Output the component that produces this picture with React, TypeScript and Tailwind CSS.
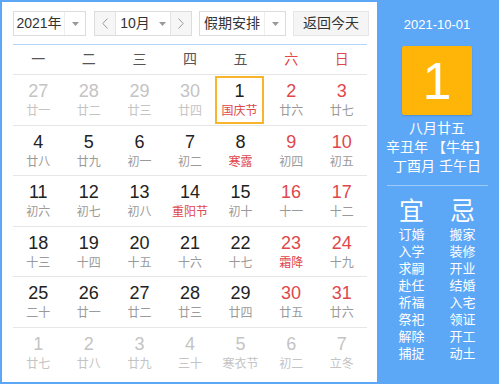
import React from 'react'

type Day = { n: number; sub: string; muted?: boolean; red?: boolean; subRed?: boolean; today?: boolean }

const rows: Day[][] = [
  [
    { n: 27, sub: '廿一', muted: true },
    { n: 28, sub: '廿二', muted: true },
    { n: 29, sub: '廿三', muted: true },
    { n: 30, sub: '廿四', muted: true },
    { n: 1, sub: '国庆节', subRed: true, today: true },
    { n: 2, sub: '廿六', red: true },
    { n: 3, sub: '廿七', red: true },
  ],
  [
    { n: 4, sub: '廿八' },
    { n: 5, sub: '廿九' },
    { n: 6, sub: '初一' },
    { n: 7, sub: '初二' },
    { n: 8, sub: '寒露', subRed: true },
    { n: 9, sub: '初四', red: true },
    { n: 10, sub: '初五', red: true },
  ],
  [
    { n: 11, sub: '初六' },
    { n: 12, sub: '初七' },
    { n: 13, sub: '初八' },
    { n: 14, sub: '重阳节', subRed: true },
    { n: 15, sub: '初十' },
    { n: 16, sub: '十一', red: true },
    { n: 17, sub: '十二', red: true },
  ],
  [
    { n: 18, sub: '十三' },
    { n: 19, sub: '十四' },
    { n: 20, sub: '十五' },
    { n: 21, sub: '十六' },
    { n: 22, sub: '十七' },
    { n: 23, sub: '霜降', red: true, subRed: true },
    { n: 24, sub: '十九', red: true },
  ],
  [
    { n: 25, sub: '二十' },
    { n: 26, sub: '廿一' },
    { n: 27, sub: '廿二' },
    { n: 28, sub: '廿三' },
    { n: 29, sub: '廿四' },
    { n: 30, sub: '廿五', red: true },
    { n: 31, sub: '廿六', red: true },
  ],
  [
    { n: 1, sub: '廿七', muted: true },
    { n: 2, sub: '廿八', muted: true },
    { n: 3, sub: '廿九', muted: true },
    { n: 4, sub: '三十', muted: true },
    { n: 5, sub: '寒衣节', muted: true },
    { n: 6, sub: '初二', muted: true },
    { n: 7, sub: '立冬', muted: true },
  ],
]

const weekdays = ['一', '二', '三', '四', '五', '六', '日']
const yi = ['订婚', '入学', '求嗣', '赴任', '祈福', '祭祀', '解除', '捕捉']
const ji = ['搬家', '装修', '开业', '结婚', '入宅', '领证', '开工', '动土']

function Caret() {
  return (
    <svg width="7" height="4" viewBox="0 0 7 4">
      <polygon points="0,0 7,0 3.5,4" fill="#999" />
    </svg>
  )
}

function Chevron({ left }: { left?: boolean }) {
  return (
    <svg width="6" height="11" viewBox="0 0 6 11">
      <polyline
        points={left ? '5.5,0.5 0.8,5.5 5.5,10.5' : '0.5,0.5 5.2,5.5 0.5,10.5'}
        fill="none"
        stroke="#999"
        strokeWidth="1"
      />
    </svg>
  )
}

function Select({ label, width }: { label: string; width: string }) {
  return (
    <div className={`flex h-[25px] ${width} items-stretch border border-[#dcdcdc] bg-white`}>
      <span className="flex flex-1 items-center justify-center text-[14px] text-[#333]">{label}</span>
      <span className="flex w-[21px] items-center justify-center border-l border-[#eee]">
        <Caret />
      </span>
    </div>
  )
}

export default function App() {
  return (
    <div
      className="flex h-[384px] w-[499px] border-2 border-[#5da7f7] bg-[#5da7f7]"
      style={{ fontFamily: '"Liberation Sans", "Noto Sans CJK SC", sans-serif' }}
    >
      <div className="w-[375px] bg-white pl-[11px] pt-[9px]">
        <div className="flex h-[25px] items-center">
          <Select label="2021年" width="w-[73px]" />
          <div className="ml-[8px] flex h-[25px] w-[98px] items-stretch border border-[#dcdcdc] bg-[#f6f6f6]">
            <span className="flex w-[20px] items-center justify-center">
              <Chevron left />
            </span>
            <span className="flex flex-1 items-center justify-center gap-[9px] border-x border-[#e3e3e3] bg-white text-[14px] text-[#333]">
              10月
              <Caret />
            </span>
            <span className="flex w-[20px] items-center justify-center">
              <Chevron />
            </span>
          </div>
          <div className="ml-[7px]">
            <Select label="假期安排" width="w-[87px]" />
          </div>
          <div className="ml-[7px] flex h-[25px] w-[76px] items-center justify-center border border-[#e6e6e6] bg-[#f5f5f5] text-[14px] text-[#333]">
            返回今天
          </div>
        </div>

        <div className="mt-[8px] w-[354px] border-t border-[#b4d5f7]" />

        <div className="grid h-[30px] w-[354px] grid-cols-7 border-b border-[#e6e6e6]">
          {weekdays.map((w, i) => (
            <div
              key={w}
              className={`flex items-center justify-center text-[14px] ${i >= 5 ? 'text-[#e0474c]' : 'text-[#555]'}`}
            >
              {w}
            </div>
          ))}
        </div>

        {rows.map((row, ri) => (
          <div
            key={ri}
            className={`grid h-[50.5px] w-[354px] grid-cols-7 ${ri < 5 ? 'border-b border-[#e6e6e6]' : ''}`}
          >
            {row.map((d, ci) => {
              const numColor = d.muted ? 'text-[#c4c4c4]' : d.red ? 'text-[#e0474c]' : 'text-[#222]'
              const subColor = d.muted ? 'text-[#c4c4c4]' : d.subRed ? 'text-[#e0474c]' : 'text-[#9a9a9a]'
              return (
                <div key={ci} className="flex items-stretch justify-start">
                  <div
                    className={`flex flex-1 flex-col items-center justify-center ${
                      d.today ? 'my-[1px] mr-[2px] border-2 border-[#f7b42c]' : ''
                    }`}
                  >
                    <span className={`text-[18px] leading-[22px] ${numColor}`}>{d.n}</span>
                    <span className={`mt-[1px] text-[12px] leading-[16px] ${subColor}`}>{d.sub}</span>
                  </div>
                </div>
              )
            })}
          </div>
        ))}
      </div>

      <div className="flex flex-1 flex-col items-center text-white">
        <div className="mt-[14px] text-[13px] leading-[18px]">2021-10-01</div>
        <div className="mt-[12px] flex h-[69px] w-[70px] items-center justify-center rounded-[2px] bg-[#ffb507] text-[52px] leading-none shadow-[0_1px_2px_rgba(0,0,0,0.15)]">
          1
        </div>
        <div className="mt-[4px] flex flex-col items-center text-[14px] leading-[19px]">
          <span>八月廿五</span>
          <span>辛丑年 【牛年】</span>
          <span>丁酉月 壬午日</span>
        </div>
        <div className="mt-[9px] w-[101px] border-t border-[#9ccbfa]" />
        <div className="mt-[10px] flex gap-[25px]">
          {[
            { h: '宜', items: yi },
            { h: '忌', items: ji },
          ].map((col) => (
            <div key={col.h} className="flex flex-col items-center">
              <span className="text-[25px] leading-[30px]">{col.h}</span>
              {col.items.map((t) => (
                <span key={t} className="text-[13px] leading-[17px]">
                  {t}
                </span>
              ))}
            </div>
          ))}
        </div>
      </div>
    </div>
  )
}
